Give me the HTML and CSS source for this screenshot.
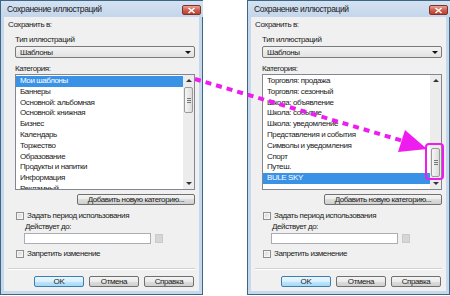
FILE: index.html
```html
<!DOCTYPE html>
<html lang="ru">
<head>
    <meta charset="UTF-8">
    <title>Сохранение иллюстраций</title>
    <link rel="stylesheet" href="styles.css">
</head>
<body>
<div class="stage">
    <!-- dialog before: list at the top -->
    <div class="dialog">
        <div class="titlebar">
            <span class="title">Сохранение иллюстраций</span>
            <span class="close"><svg width="9" height="7" viewBox="0 0 9 7"><path d="M1.5 1 L7.5 6 M7.5 1 L1.5 6" stroke="#fff" stroke-width="1.6"/></svg></span>
        </div>
        <div class="client">
            <div class="save-label">Сохранить в:</div>
            <div class="group">
                <div class="type-label">Тип иллюстраций</div>
                <div class="combo"><span>Шаблоны</span><span class="combo-arrow"></span></div>
                <div class="cat-label">Категория:</div>
                <div class="listbox">
                    <div class="items">
                        <div class="item selected">Мои шаблоны</div>
                        <div class="item">Баннеры</div>
                        <div class="item">Основной: альбомная</div>
                        <div class="item">Основной: книжная</div>
                        <div class="item">Бизнес</div>
                        <div class="item">Календарь</div>
                        <div class="item">Торжество</div>
                        <div class="item">Образование</div>
                        <div class="item">Продукты и напитки</div>
                        <div class="item">Информация</div>
                        <div class="item">Рекламный</div>
                    </div>
                    <div class="scrollbar">
                        <div class="sb-btn"><span class="arrow-up"></span></div>
                        <div class="sb-track top"><div class="thumb"><span class="grip"></span></div></div>
                        <div class="sb-btn"><span class="arrow-down"></span></div>
                    </div>
                </div>
                <div class="add-row"><button class="btn add-btn">Добавить новую категорию...</button></div>
            </div>
            <label class="check-row"><span class="checkbox"></span>Задать период использования</label>
            <div class="until">Действует до:</div>
            <div class="date-row"><div class="date-input"></div><div class="date-btn"></div></div>
            <label class="check-row"><span class="checkbox"></span>Запретить изменение</label>
            <div class="separator"></div>
            <div class="buttons">
                <button class="btn default">OK</button>
                <button class="btn">Отмена</button>
                <button class="btn">Справка</button>
            </div>
        </div>
    </div>

    <!-- dialog after: scrolled to the new category -->
    <div class="dialog">
        <div class="titlebar">
            <span class="title">Сохранение иллюстраций</span>
            <span class="close"><svg width="9" height="7" viewBox="0 0 9 7"><path d="M1.5 1 L7.5 6 M7.5 1 L1.5 6" stroke="#fff" stroke-width="1.6"/></svg></span>
        </div>
        <div class="client">
            <div class="save-label">Сохранить в:</div>
            <div class="group">
                <div class="type-label">Тип иллюстраций</div>
                <div class="combo"><span>Шаблоны</span><span class="combo-arrow"></span></div>
                <div class="cat-label">Категория:</div>
                <div class="listbox">
                    <div class="items">
                        <div class="item">Торговля: продажа</div>
                        <div class="item">Торговля: сезонный</div>
                        <div class="item">Школа: объявление</div>
                        <div class="item">Школа: событие</div>
                        <div class="item">Школа: уведомление</div>
                        <div class="item">Представления и события</div>
                        <div class="item">Символы и уведомления</div>
                        <div class="item">Спорт</div>
                        <div class="item">Путеш.</div>
                        <div class="item selected">BULE SKY</div>
                    </div>
                    <div class="scrollbar">
                        <div class="sb-btn"><span class="arrow-up"></span></div>
                        <div class="sb-track bottom"><div class="thumb tall"><span class="grip"></span></div></div>
                        <div class="sb-btn"><span class="arrow-down"></span></div>
                    </div>
                </div>
                <div class="add-row"><button class="btn add-btn">Добавить новую категорию...</button></div>
            </div>
            <label class="check-row"><span class="checkbox"></span>Задать период использования</label>
            <div class="until">Действует до:</div>
            <div class="date-row"><div class="date-input"></div><div class="date-btn"></div></div>
            <label class="check-row"><span class="checkbox"></span>Запретить изменение</label>
            <div class="separator"></div>
            <div class="buttons">
                <button class="btn default">OK</button>
                <button class="btn">Отмена</button>
                <button class="btn">Справка</button>
            </div>
        </div>
    </div>

    <!-- magenta annotation over both dialogs -->
    <svg class="annotation" width="450" height="296" viewBox="0 0 450 296">
        <line x1="195" y1="79" x2="403" y2="141" stroke="#ee1cee" stroke-width="4" stroke-dasharray="6 5"/>
        <polygon points="427,149 405,130 398,152" fill="#ee1cee"/>
        <rect x="426" y="144" width="17" height="35" rx="3" fill="none" stroke="#ee1cee" stroke-width="2"/>
    </svg>
</div>
</body>
</html>
```

FILE: styles.css
```css
* { box-sizing: border-box; }
body { margin: 0; background: #fff; font-family: "Liberation Sans", Arial, sans-serif; font-size: 8px; letter-spacing: -0.4px; color: #222; }
.stage { position: relative; width: 450px; height: 296px; overflow: hidden; display: flex; gap: 44px; }

.dialog { width: 203px; height: 295px; border: 1px solid #3d6584; background: #c6d8ec; padding: 0 3px 3px; display: flex; flex-direction: column; }
.titlebar { height: 16px; display: flex; align-items: center; justify-content: space-between; padding-left: 3px; margin-right: -1px; background: linear-gradient(#d4e2f2, #c4d6eb); margin-left: -3px; margin-right: -4px; padding-left: 6px; padding-right: 2px; }
.title { font-size: 8.5px; color: #1a1a1a; }
.close { width: 19px; height: 10px; margin-top: 2px; border: 1px solid #7a3430; border-radius: 2px; background: linear-gradient(#e8a598, #d0604f 50%, #c0402f); display: flex; align-items: center; justify-content: center; }

.client { flex: 1; background: #f0f0f0; display: flex; flex-direction: column; }
.save-label { height: 16px; line-height: 16px; padding-left: 4px; }
.group { padding: 0 4px 0 11px; }
.type-label { height: 13px; line-height: 13px; }
.combo { height: 12px; border: 1px solid #7a7a7a; border-radius: 2px; background: linear-gradient(#f3f3f3, #e2e2e2); display: flex; align-items: center; justify-content: space-between; padding: 0 3px 0 4px; }
.combo-arrow { width: 0; height: 0; border-left: 3px solid transparent; border-right: 3px solid transparent; border-top: 3px solid #111; }
.cat-label { height: 16px; padding-top: 6px; line-height: 10px; }

.listbox { height: 116px; border: 1px solid #828790; background: #fff; display: flex; overflow: hidden; }
.items { flex: 1; padding-top: 1px; overflow: hidden; }
.item { height: 10.8px; line-height: 10.8px; padding-left: 4px; white-space: nowrap; }
.item.selected { background: #3a92e6; color: #fff; }
.scrollbar { width: 11px; display: flex; flex-direction: column; background: #ececec; }
.sb-btn { height: 11px; display: flex; align-items: center; justify-content: center; }
.arrow-up { width: 0; height: 0; border-left: 3px solid transparent; border-right: 3px solid transparent; border-bottom: 3px solid #333; }
.arrow-down { width: 0; height: 0; border-left: 3px solid transparent; border-right: 3px solid transparent; border-top: 3px solid #333; }
.sb-track { flex: 1; display: flex; flex-direction: column; padding: 1px 1px; }
.sb-track.bottom { justify-content: flex-end; }
.thumb { height: 26px; border: 1px solid #9a9a9a; border-radius: 2px; background: linear-gradient(to right, #f6f6f6, #dcdcdc); display: flex; align-items: center; justify-content: center; }
.thumb.tall { height: 29px; }
.grip { width: 4px; height: 5px; background: repeating-linear-gradient(#777 0 1px, transparent 1px 2px); }

.add-row { margin-top: 4px; display: flex; justify-content: flex-end; }
.btn { font: inherit; letter-spacing: inherit; color: #222; height: 11px; padding: 0; border: 1px solid #707070; border-radius: 2px; background: linear-gradient(#f4f4f4, #ebebeb 50%, #dddddd 50%, #d0d0d0); line-height: 9px; }
.add-btn { width: 118px; }
.btn.default { border-color: #3c7fb1; background: linear-gradient(#eaf6fd, #d9f0fc 50%, #bee6fd 50%, #a7d9f5); }

.check-row { margin-top: 4px; height: 13px; line-height: 13px; padding-left: 12px; display: flex; align-items: center; gap: 3px; }
.check-row + .check-row, .date-row + .check-row { margin-top: 3px; }
.checkbox { width: 8px; height: 8px; border: 1px solid #8e8f8f; background: linear-gradient(135deg, #d4d4d4, #f8f8f8); box-shadow: inset 0 0 0 1px #f4f4f4; }
.until { height: 9px; line-height: 9px; padding-left: 21px; }
.date-row { margin-top: 2px; height: 11px; padding-left: 20px; display: flex; align-items: center; gap: 4px; }
.date-input { width: 127px; height: 11px; border: 1px solid #abadb3; background: #fff; }
.date-btn { width: 8px; height: 9px; background: #d6d6d6; border: 1px solid #cacaca; }

.separator { margin: 8px 4px 0; height: 2px; border-top: 1px solid #d0d0d0; border-bottom: 1px solid #fff; }
.buttons { margin-top: 6px; display: flex; justify-content: flex-end; gap: 5px; padding-right: 5px; }
.buttons .btn { width: 50px; }

.annotation { position: absolute; left: 0; top: 0; pointer-events: none; }
```
